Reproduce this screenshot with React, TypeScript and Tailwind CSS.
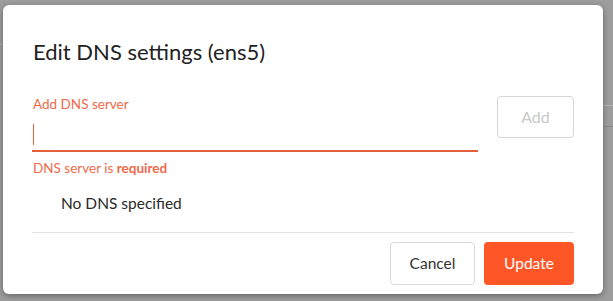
import React from "react";

export default function App() {
  return (
    <div
      className="w-[613px] h-[301px] bg-[#9d9d9d] overflow-hidden relative"
      style={{ fontFamily: "Lato, 'Open Sans', sans-serif" }}
    >
      <div className="absolute left-0 top-[44px] w-[4px] h-px bg-[#b5b5b5]" />
      <div className="absolute right-0 top-[105px] w-[10px] h-px bg-[#b5b5b5]" />
      <div className="absolute right-0 top-[126px] w-[10px] h-px bg-[#8a8a8a]" />
      <div className="pt-[5px] pl-[3px]">
        <div className="w-[600px] h-[289px] bg-white rounded-[6px] shadow-[0_2px_6px_rgba(0,0,0,0.35)] flex flex-col px-[29px] relative">
          <div className="pt-[33px] h-[64px] pl-[1px] text-[22px] leading-[28px] text-[#222]">
            Edit DNS settings (ens5)
          </div>
          <div className="flex mt-[27px] gap-[19px]">
            <div className="w-[446px] flex flex-col">
              <div className="text-[13.5px] leading-[16px] text-[#f0694a] pl-[1px]">Add DNS server</div>
              <div className="h-[40px] border-b-2 border-[#e4603c] flex items-center pt-[7px]">
                <div className="w-px h-[21px] bg-[#e4603c] ml-[1px]" />
              </div>
              <div className="mt-[8px] text-[13.5px] leading-[16px] text-[#f0694a] pl-[1px]">
                DNS server is <span className="font-bold">required</span>
              </div>
            </div>
            <button className="w-[77px] h-[42px] border border-[#d6d6d6] rounded-[4px] text-[16px] text-[#c9c9c9] bg-white">
              Add
            </button>
          </div>
          <div className="mt-[17px] pl-[29px] text-[15.5px] leading-[20px] text-[#2a2a2a]">No DNS specified</div>
          <div className="mt-[19px] h-px bg-[#e2e2e2]" />
          <div className="flex justify-end gap-[9px] mt-[9px]">
            <button className="w-[85px] h-[43px] border border-[#d8d8d8] rounded-[4px] bg-white text-[15.5px] text-[#333]">
              Cancel
            </button>
            <button className="w-[90px] h-[43px] rounded-[4px] bg-[#ff5627] text-[15.5px] text-white">
              Update
            </button>
          </div>
        </div>
      </div>
    </div>
  );
}
